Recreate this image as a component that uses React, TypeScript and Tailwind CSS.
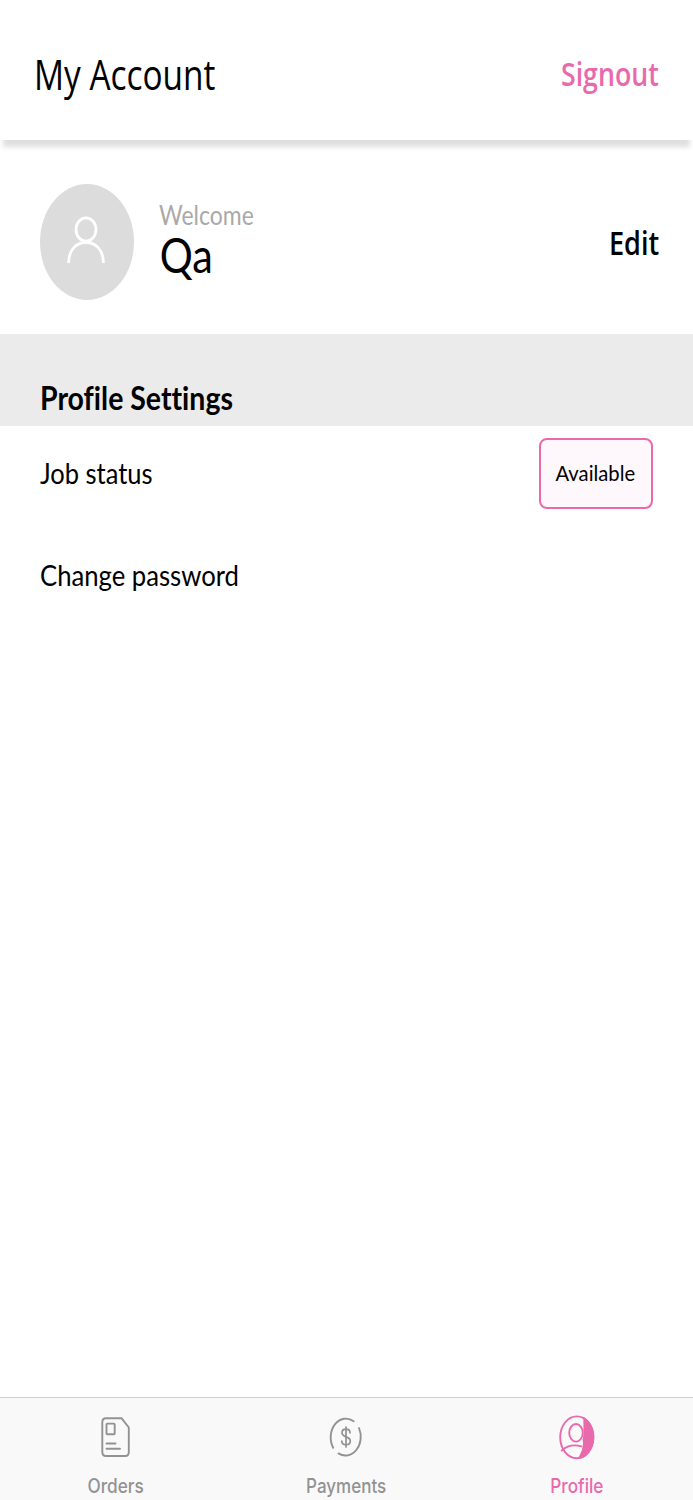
import type { ReactNode } from "react";

function Tab({ label, active, stretch, children }: { label: string; active?: boolean; stretch: string; children: ReactNode }) {
  return (
    <button className={`flex flex-1 flex-col items-center pt-3 ${active ? "text-[#e969ad]" : "text-[#929292]"}`}>
      <svg className="h-[52px] w-[42px] shrink-0" viewBox="0 0 42 52" fill="none" stroke="currentColor" strokeWidth="1.9" strokeLinecap="round" strokeLinejoin="round">
        {children}
      </svg>
      <span className={`mt-[11px] text-[20px] leading-[26px] font-medium whitespace-nowrap font-['Inter',sans-serif] ${stretch}`}>{label}</span>
    </button>
  );
}

export default function App() {
  return (
    <div className="flex h-[1500px] w-[693px] flex-col overflow-hidden bg-white font-['Lato',sans-serif] text-black [font-variant-ligatures:none]">
      <header className="flex h-[140px] shrink-0 items-center justify-between pr-[34px] pl-[34px] pt-2 font-['Open_Sans',sans-serif] shadow-[0_10px_5px_-3px_rgba(0,0,0,0.13)]">
        <h1 className="origin-left scale-x-[0.795] text-[42px] leading-[56px] whitespace-nowrap">My Account</h1>
        <button className="origin-right scale-x-[0.81] text-[33px] leading-[44px] font-semibold whitespace-nowrap text-[#e969ad]">Signout</button>
      </header>

      <section className="flex h-[194px] shrink-0 items-center pt-[10px] pr-[34px] pl-10">
        <div className="flex h-[116px] w-[94px] items-center justify-center rounded-[50%] bg-[#dcdcdc]">
          <svg className="mr-[3px] mb-[5px] h-12 w-10" viewBox="0 0 40 48" fill="none" stroke="white" strokeWidth="2.8">
            <ellipse cx="20" cy="13.5" rx="10" ry="11.7" />
            <path d="M2.6 47C2.6 34 10 26.5 20 26.5S37.4 34 37.4 47" />
          </svg>
        </div>
        <div className="mb-[6px] ml-[25px] flex flex-col items-start">
          <p className="h-8 origin-left scale-x-[0.85] text-[27px] leading-8 text-[#a9a9a9]">Welcome</p>
          <p className="h-12 origin-left scale-x-[0.86] pl-px text-[48px] leading-[48px]">Qa</p>
        </div>
        <button className="mt-[2px] ml-auto origin-right scale-x-[0.82] text-[33px] leading-[44px] font-semibold font-['Open_Sans',sans-serif]">Edit</button>
      </section>

      <div className="flex h-[92px] shrink-0 items-end bg-[#ebebeb] pb-[9px] pl-10">
        <h2 className="origin-left scale-x-[0.89] text-[32px] leading-[38px] font-bold whitespace-nowrap">Profile Settings</h2>
      </div>

      <main className="flex-1">
        <div className="flex h-[95px] items-center justify-between pr-10 pl-10">
          <span className="mb-[2px] origin-left scale-x-[0.91] text-[28px] leading-[34px] whitespace-nowrap">Job status</span>
          <button className="flex h-[71px] w-[114px] items-center justify-center rounded-[8px] border-2 border-[#e969ad] bg-[#fef7fc]">
            <span className="mr-[2px] mb-[2px] scale-x-[0.92] text-[22px] leading-[28px] whitespace-nowrap">Available</span>
          </button>
        </div>
        <div className="flex h-[108px] items-center pl-10">
          <span className="origin-left scale-x-[0.917] text-[28px] leading-[34px] whitespace-nowrap">Change password</span>
        </div>
      </main>

      <nav className="flex h-[103px] shrink-0 border-t border-[#cfcfcf] bg-[#f9f9f9] pr-px">
        <Tab label="Orders" stretch="scale-x-[0.86]">
          <path d="M12 8.2H27.5L34.8 17.5V42Q34.8 46 31.3 46H12Q8.3 46 8.3 42V12.2Q8.3 8.2 12 8.2Z" />
          <rect x="12.5" y="13.6" width="8.2" height="10.6" rx="0.8" />
          <path d="M12.5 33.5H21.5M12.5 38.8H26" />
        </Tab>
        <Tab label="Payments" stretch="scale-x-[0.85]">
          <path d="M28.7 11.3A15.2 18.8 0 0 0 8.2 37.8M34 18A15.2 18.8 0 0 1 13.5 43.4" />
          <path strokeWidth="1.7" d="M21 17V37M25 22.8C25 20.3 23.4 19.2 21 19.2C18.6 19.2 17 20.7 17 22.8C17 28 25.3 25.8 25.3 31C25.3 33.4 23.5 34.8 21 34.8C18.5 34.8 16.8 33.4 16.8 31" />
        </Tab>
        <Tab label="Profile" active stretch="scale-x-[0.86]">
          <ellipse cx="20.8" cy="27.3" rx="16.6" ry="20.9" />
          <path d="M27.3 6.8C34 10 38.2 18 38.2 27.3C38.2 39 30.5 48.8 21.5 48.9C25.5 43 27 38 27.1 32C26 30 27.5 28 27.5 22Z" fill="currentColor" stroke="none" />
          <ellipse cx="20" cy="22.8" rx="6.8" ry="8.8" />
          <path d="M5.8 40.5Q13.5 33.2 25.5 36.3" />
        </Tab>
      </nav>
    </div>
  );
}
